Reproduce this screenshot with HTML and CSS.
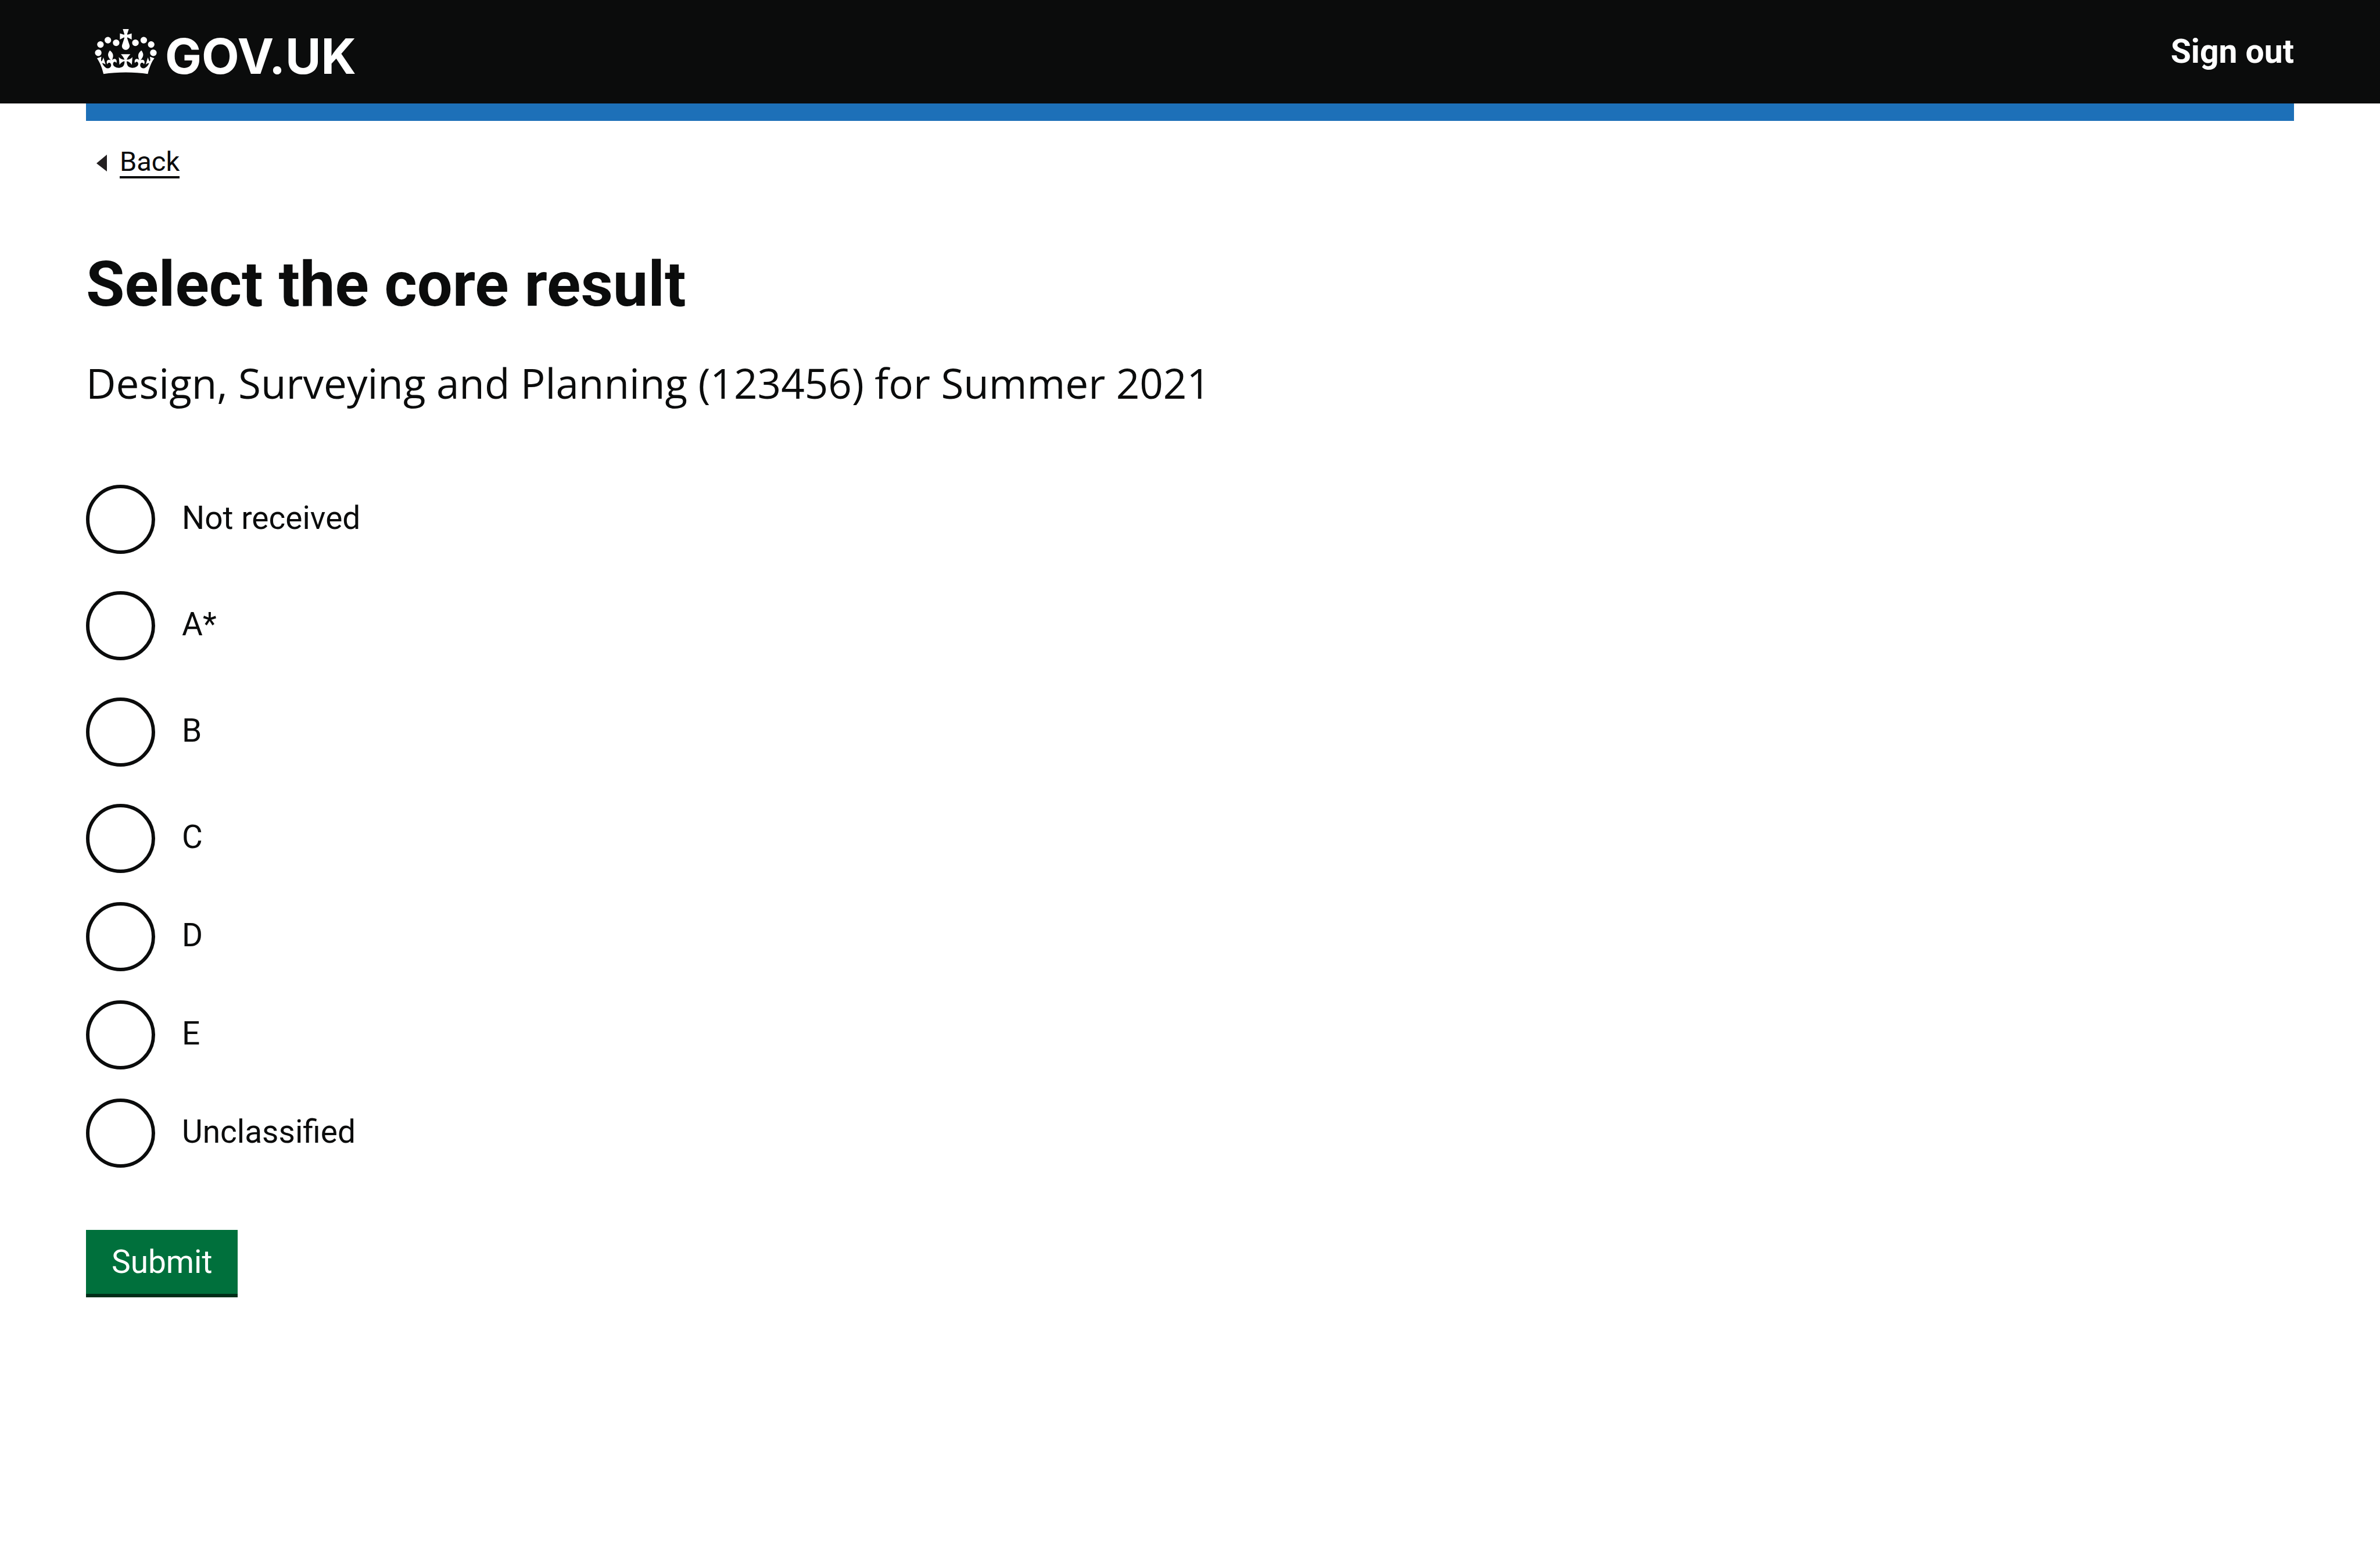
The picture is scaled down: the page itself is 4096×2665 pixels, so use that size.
FILE: index.html
```html
<!DOCTYPE html>
<html lang="en">
<head>
<meta charset="utf-8">
<meta name="viewport" content="width=device-width, initial-scale=1">
<title>Select the core result - GOV.UK</title>
<link rel="stylesheet" href="styles.css">
</head>
<body>
<header class="header">
  <a class="logo" href="#">
    <svg class="logo-crown" viewBox="0 0 132 97" aria-hidden="true"><path fill="currentColor" fill-rule="evenodd" d="M25 30.2c3.5 1.5 7.7-.2 9.1-3.7 1.5-3.6-.2-7.8-3.9-9.2-3.6-1.4-7.6.3-9.1 3.9-1.4 3.5.3 7.5 3.9 9zM9 39.5c3.6 1.5 7.8-.2 9.2-3.7 1.5-3.6-.2-7.8-3.9-9.1-3.6-1.5-7.6.2-9.1 3.8-1.4 3.5.3 7.5 3.8 9zM4.4 57.2c3.5 1.5 7.7-.2 9.1-3.8 1.5-3.6-.2-7.7-3.9-9.1-3.5-1.5-7.6.3-9.1 3.8-1.4 3.5.3 7.6 3.9 9.1zm38.3-21.4c3.5 1.5 7.7-.2 9.1-3.8 1.5-3.6-.2-7.7-3.9-9.1-3.6-1.5-7.6.3-9.1 3.8-1.3 3.6.4 7.7 3.9 9.1zm64.4-5.6c-3.6 1.5-7.8-.2-9.1-3.7-1.5-3.6.2-7.8 3.8-9.2 3.6-1.4 7.7.3 9.2 3.9 1.3 3.5-.4 7.5-3.9 9zm15.9 9.3c-3.6 1.5-7.7-.2-9.1-3.7-1.5-3.6.2-7.8 3.7-9.1 3.6-1.5 7.7.2 9.2 3.8 1.5 3.5-.3 7.5-3.8 9zm4.7 17.7c-3.6 1.5-7.8-.2-9.2-3.8-1.5-3.6.2-7.7 3.9-9.1 3.6-1.5 7.7.3 9.2 3.8 1.3 3.5-.4 7.6-3.9 9.1zM89.3 35.8c-3.6 1.5-7.8-.2-9.2-3.8-1.4-3.6.2-7.7 3.9-9.1 3.6-1.5 7.7.3 9.2 3.8 1.4 3.6-.3 7.7-3.9 9.1zM69.7 17.7l8.9 4.7V9.3l-8.9 2.8c-.2-.3-.5-.6-.9-.9L72.4 0H59.6l3.5 11.2c-.3.3-.6.5-.9.9l-8.8-2.8v13.1l8.8-4.7c.3.3.6.7.9.9l-5 15.4v.1c-.2.8-.4 1.6-.4 2.4 0 4.1 3.1 7.5 7 8.1h.2c.3 0 .7.1 1 .1.4 0 .7 0 1-.1h.2c4-.6 7.1-4.1 7.1-8.1 0-.8-.1-1.7-.4-2.4V34l-5.1-15.4c.4-.2.7-.6 1-.9zM66 92.8c16.9 0 32.8 1.1 47.1 3.2 4-16.9 8.9-26.7 14-33.5l-9.6-3.4c1 4.9 1.1 7.2 0 10.2-1.5-1.4-3-4.3-4.2-8.7L108.6 76c2.8-2 5-3.2 7.5-3.3-4.4 9.4-10 11.9-13.6 11.2-4.3-.8-6.3-4.6-5.6-7.9 1-4.7 5.7-5.9 8-.5 4.3-8.7-3-11.4-7.6-8.8 7.1-7.2 7.9-13.5 2.1-21.1-8 6.1-8.1 12.3-4.5 20.8-4.7-5.4-12.1-2.5-9.5 6.2 3.4-5.2 7.9-2 7.2 3.1-.6 4.3-6.4 7.8-13.5 7.2-10.3-.9-10.9-8-11.2-13.8 2.5-.5 7.1 1.8 11 7.3L80.2 60c-4.1 4.4-8 5.3-12.3 5.4 1.4-4.4 8-11.6 8-11.6H55.5s6.4 7.2 7.9 11.6c-4.2-.1-8-1-12.3-5.4l1.4 16.4c3.9-5.5 8.5-7.7 10.9-7.3-.3 5.8-.9 12.8-11.1 13.8-7.2.6-12.9-2.9-13.5-7.2-.7-5 3.8-8.3 7.1-3.1 2.7-8.7-4.6-11.6-9.4-6.2 3.7-8.5 3.6-14.7-4.6-20.8-5.8 7.6-5 13.9 2.2 21.1-4.7-2.6-11.9.1-7.7 8.8 2.3-5.5 7.1-4.2 8.1.5.7 3.3-1.3 7.1-5.7 7.9-3.5.7-9-1.8-13.5-11.2 2.5.1 4.7 1.3 7.5 3.3l-4.7-15.4c-1.2 4.4-2.7 7.2-4.3 8.7-1.1-3-.9-5.3 0-10.2l-9.5 3.4c5 6.9 9.9 16.7 14 33.5 14.8-2.1 30.8-3.2 47.7-3.2z"/></svg>
    <span class="logo-text">GOV.UK</span>
  </a>
  <a class="sign-out" href="#">Sign out</a>
</header>

<div class="container">
  <div class="header-bar"></div>
  <nav class="back">
    <svg class="back-arrow" viewBox="0 0 18 29" aria-hidden="true"><path fill="currentColor" d="M18 0v29L0 15z"/></svg>
    <a class="back-link" href="#">Back</a>
  </nav>

  <main>
    <h1 class="title">Select the core result</h1>
    <p class="subtitle">Design, Surveying and Planning (123456) for Summer 2021</p>

    <form class="form">
      <div class="radios" role="radiogroup" aria-label="Core result">
        <div class="radios roomy">
          <div class="radio"><input class="radio-input" type="radio" name="result" id="not-received"><label class="radio-label" for="not-received">Not received</label></div>
          <div class="radio"><input class="radio-input" type="radio" name="result" id="a-star"><label class="radio-label" for="a-star">A*</label></div>
          <div class="radio"><input class="radio-input" type="radio" name="result" id="b"><label class="radio-label" for="b">B</label></div>
          <div class="radio"><input class="radio-input" type="radio" name="result" id="c"><label class="radio-label" for="c">C</label></div>
        </div>
        <div class="radio"><input class="radio-input" type="radio" name="result" id="d"><label class="radio-label" for="d">D</label></div>
        <div class="radio"><input class="radio-input" type="radio" name="result" id="e"><label class="radio-label" for="e">E</label></div>
        <div class="radio"><input class="radio-input" type="radio" name="result" id="unclassified"><label class="radio-label" for="unclassified">Unclassified</label></div>
      </div>
      <button class="button" type="button">Submit</button>
    </form>
  </main>
</div>
</body>
</html>
```
FILE: styles.css
```css
* {
  box-sizing: border-box;
}

body {
  margin: 0;
  background: #fff;
  color: #0b0c0c;
  font-family: Roboto, "Liberation Sans", sans-serif;
  font-size: 55px;
}

.header {
  display: flex;
  justify-content: space-between;
  align-items: center;
  padding: 50px 148px;
  background: #0b0c0c;
  color: #fff;
}

.logo {
  display: flex;
  align-items: flex-end;
  gap: 14px;
  padding-left: 15px;
  color: inherit;
  text-decoration: none;
}

.logo-crown {
  display: block;
  width: 107px;
  height: 78px;
}

.logo-text {
  font-family: Inter, Roboto, sans-serif;
  font-size: 84px;
  font-weight: 700;
  line-height: 62px;
}

.sign-out {
  color: inherit;
  font-size: 57px;
  font-weight: 700;
  line-height: 72px;
  text-decoration: none;
}

.container {
  padding: 0 148px;
}

.header-bar {
  height: 30px;
  background: #1d70b8;
}

.back {
  display: flex;
  align-items: center;
  gap: 22px;
  padding: 45px 0 0 18px;
}

.back-arrow {
  width: 18px;
  height: 29px;
  color: #231f20;
}

.back-link {
  border-bottom: 4px solid;
  color: inherit;
  font-size: 47px;
  line-height: 50px;
  text-decoration: none;
}

.title {
  margin: 122px 0 70px;
  font-size: 108px;
  font-weight: 700;
  line-height: 120px;
}

.subtitle {
  margin: 0;
  font-family: "Open Sans", "Noto Sans", sans-serif;
  font-size: 71px;
  line-height: 80px;
}

.form {
  display: flex;
  flex-direction: column;
  align-items: flex-start;
  gap: 107px;
  padding-top: 135px;
}

.radios {
  display: flex;
  flex-direction: column;
  gap: 50px;
}

.roomy {
  gap: 64px;
}

.radio {
  display: flex;
  align-items: center;
}

.radio-input {
  appearance: none;
  flex: none;
  width: 119px;
  height: 119px;
  margin: 0;
  border: 6px solid #0b0c0c;
  border-radius: 50%;
  background: #fff;
}

.radio-input:checked {
  background: radial-gradient(#0b0c0c 50%, #fff 52%);
}

.radio-label {
  padding: 0 46px 6px;
  line-height: 72px;
}

.button {
  padding: 19px 44px;
  border: 0;
  border-bottom: 6px solid #002d18;
  background: #00703c;
  color: #fff;
  font: inherit;
  line-height: 72px;
}
```
